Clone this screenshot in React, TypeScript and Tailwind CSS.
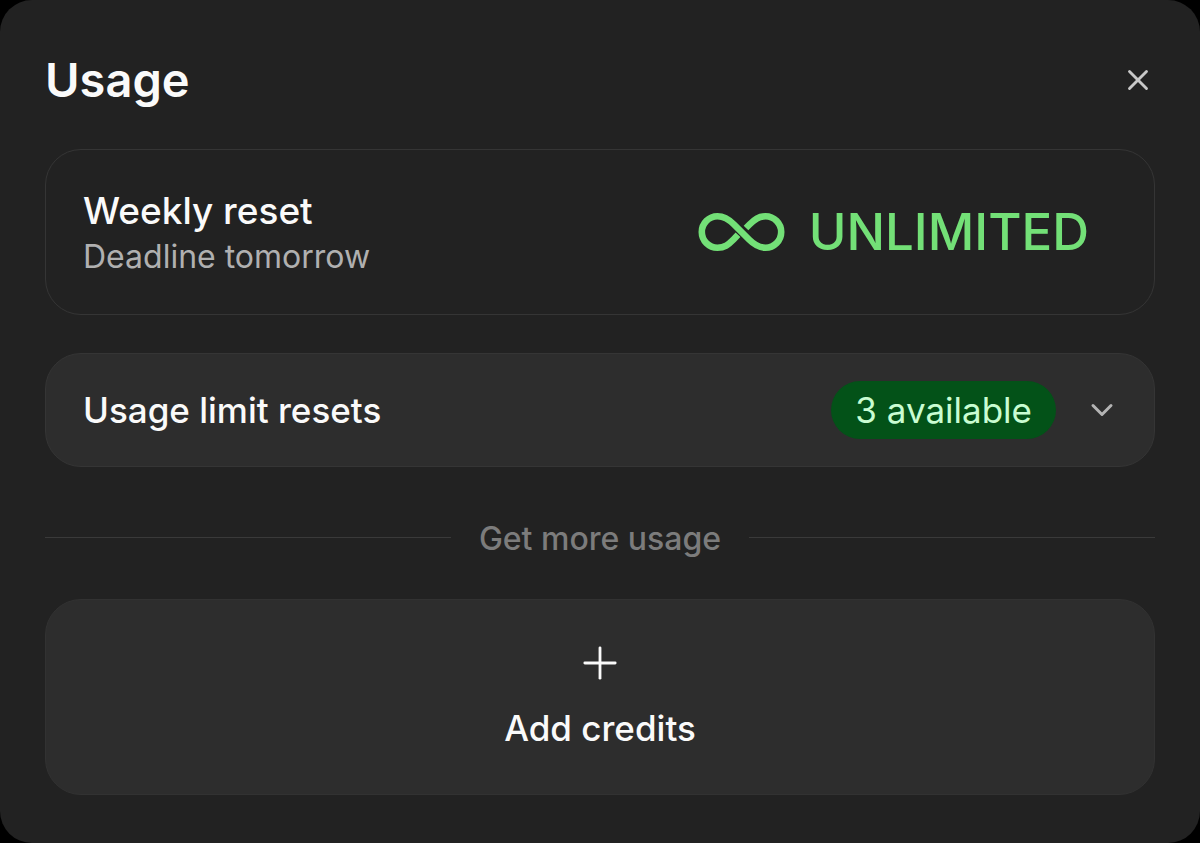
import { ChevronDown, Plus, X } from 'lucide-react'

const InfinityMark: React.FC = () => {
  return (
    <svg
      viewBox="0 0 87 39"
      className="h-[39px] w-[87px] shrink-0"
      fill="none"
      stroke="currentColor"
      strokeWidth="6.6"
      aria-hidden="true"
    >
      <path d="M40 21.8L35.5 26.5C30.5 31.6 26.5 34.7 19.5 34.7A15.7 15.7 0 0 1 19.5 3.3C26.5 3.3 31 6.5 36 11.5L51 26.5C56 31.5 60.5 34.7 67.5 34.7A15.7 15.7 0 0 0 67.5 3.3C60.5 3.3 56.5 6.5 51.5 11.5L48 15" />
    </svg>
  )
}

const WeeklyReset: React.FC = () => {
  return (
    <section className="flex flex-wrap items-center justify-between gap-6 rounded-[36px] border border-[#353535] py-[34px] pr-[65px] pl-[37px]">
      <div className="flex flex-col pt-1">
        <h2 className="text-[37px] leading-[46px] font-medium text-[#fafafa]">
          Weekly reset
        </h2>
        <p className="text-[32px] leading-[46px] text-[#b0b0b0]">
          Deadline tomorrow
        </p>
      </div>
      <div className="flex items-center gap-6 text-[#73e077]">
        <InfinityMark />
        <span className="text-[51px] leading-[60px] font-medium">
          UNLIMITED
        </span>
      </div>
    </section>
  )
}

const LimitResets: React.FC = () => {
  return (
    <button
      type="button"
      aria-expanded="false"
      className="mt-[38px] flex w-full items-center justify-between gap-6 rounded-[36px] border border-[#353535] bg-[#2d2d2d] py-[27px] pr-[34px] pl-[37px] text-left"
    >
      <span className="text-[35px] leading-[46px] font-medium text-[#fafafa]">
        Usage limit resets
      </span>
      <span className="flex items-center gap-7">
        <span className="rounded-full bg-[#035218] px-6 py-[6px] text-[35px] leading-[46px] text-[#c9fdd2]">
          3 available
        </span>
        <ChevronDown size={36} strokeWidth={2} className="text-[#b4b4b4]" />
      </span>
    </button>
  )
}

const App: React.FC = () => {
  return (
    <div className="min-h-screen bg-black font-['Inter',sans-serif]">
      <main className="flex min-h-screen flex-col rounded-[32px] bg-[#222222] px-[45px] py-12">
        <header className="mb-[37px] flex items-center justify-between">
          <h1 className="text-[47px] leading-[64px] font-semibold text-[#fafafa]">
            Usage
          </h1>
          <button type="button" aria-label="Close" className="text-[#c8c8c8]">
            <X size={34} strokeWidth={2} />
          </button>
        </header>

        <WeeklyReset />
        <LimitResets />

        <div className="mt-[45px] mb-[37px] flex items-center gap-7">
          <div className="h-px flex-1 bg-[#3a3a3a]"></div>
          <p className="pt-1 text-[32px] leading-[46px] font-medium text-[#7c7c7c]">
            Get more usage
          </p>
          <div className="h-px flex-1 bg-[#3a3a3a]"></div>
        </div>

        <button
          type="button"
          className="flex flex-1 flex-col items-center gap-4 rounded-[36px] border border-[#323232] bg-[#2d2d2d] pt-[37px] pb-10 text-[#fafafa]"
        >
          <Plus size={52} strokeWidth={1.3} />
          <span className="text-[35px] leading-[46px] font-medium">
            Add credits
          </span>
        </button>
      </main>
    </div>
  )
}

export default App
